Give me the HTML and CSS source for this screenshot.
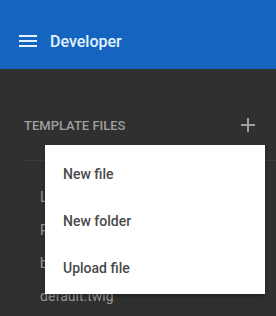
FILE: index.html
```html
<!DOCTYPE html>
<html>
<head>
<meta charset="utf-8">
<link rel="stylesheet" href="styles.css">
</head>
<body>
<header class="appbar">
  <div class="toolbar">
    <svg class="menu-icon" viewBox="0 0 24 24" width="24" height="24"><path fill="currentColor" d="M3 18h18v-2H3v2zm0-5h18v-2H3v2zm0-7v2h18V6H3z"/></svg>
    <span class="title">Developer</span>
  </div>
</header>
<main class="content">
  <div class="section-head">
    <span class="section-title">Template files</span>
    <svg class="add-icon" viewBox="0 0 24 24" width="24" height="24"><path fill="currentColor" d="M19 13h-6v6h-2v-6H5v-2h6V5h2v6h6v2z"/></svg>
  </div>
  <ul class="files">
    <li>Layouts</li>
    <li>Resources</li>
    <li>base.twig</li>
    <li>default.twig</li>
  </ul>
</main>
<div class="popup">
  <div class="popup-item">New file</div>
  <div class="popup-item">New folder</div>
  <div class="popup-item">Upload file</div>
</div>
</body>
</html>
```

FILE: styles.css
```css
html, body {
  margin: 0;
  padding: 0;
}
body {
  background: #303030;
  font-family: Roboto, "Liberation Sans", sans-serif;
  width: 276px;
  height: 316px;
  overflow: hidden;
  position: relative;
}
.appbar {
  background: #1565c0;
  padding-top: 13px;
  height: 56px;
}
.toolbar {
  height: 56px;
  display: flex;
  align-items: center;
  padding-left: 16px;
  color: #e3f2fd;
}
.menu-icon {
  display: block;
  flex: none;
}
.title {
  margin-left: 10px;
  font-size: 16px;
  font-weight: 500;
}
.content {
  padding-top: 32px;
}
.section-head {
  height: 48px;
  display: flex;
  align-items: center;
  justify-content: space-between;
  padding: 0 16px 0 24px;
  color: #9e9e9e;
}
.section-title {
  font-size: 13px;
  font-weight: 500;
  text-transform: uppercase;
}
.add-icon {
  display: block;
}
.files {
  list-style: none;
  margin: 11px 0 0 24px;
  padding: 20px 0 0 16px;
  border-top: 1px solid #3c3c3c;
}
.files li {
  height: 33px;
  line-height: 33px;
  font-size: 14px;
  color: #9a9a9a;
}
.popup {
  position: absolute;
  left: 45px;
  top: 145px;
  width: 220px;
  height: 149px;
  box-sizing: border-box;
  padding: 5px 0 0;
  background: #ffffff;
  box-shadow: 0 2px 4px rgba(0,0,0,0.35);
}
.popup-item {
  height: 47px;
  display: flex;
  align-items: center;
  padding-left: 18px;
  font-size: 14px;
  font-weight: 500;
  color: #4a4a4a;
}
```
